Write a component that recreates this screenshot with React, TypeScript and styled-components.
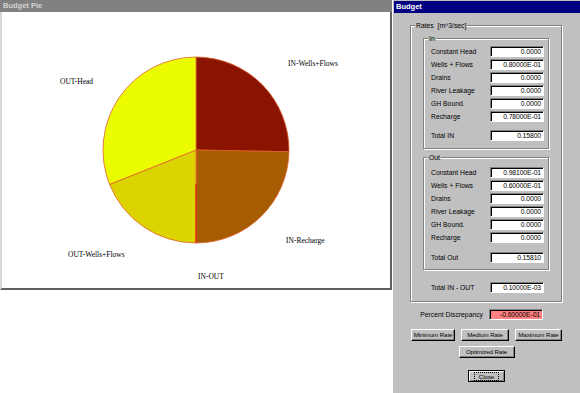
import styled, { createGlobalStyle } from 'styled-components';

const GlobalStyle = createGlobalStyle`
  html, body {
    margin: 0;
    padding: 0;
    background: #fff;
  }
  body {
    font-family: 'Liberation Sans', Arial, sans-serif;
  }
`;

const CX = 194;
const CY = 138;
const R = 93;

interface Slice {
  name: string;
  value: number;
  color: string;
}

const SLICES: Slice[] = [
  { name: 'IN-Wells+Flows', value: 0.08, color: '#8b1400' },
  { name: 'IN-Recharge', value: 0.078, color: '#a65c00' },
  { name: 'IN-OUT', value: 0.0001, color: '#e01000' },
  { name: 'OUT-Wells+Flows', value: 0.06, color: '#dcd400' },
  { name: 'OUT-Head', value: 0.0981, color: '#ecfc00' },
];

const LABELS = [
  { text: 'IN-Wells+Flows', x: 286, y: 54 },
  { text: 'OUT-Head', x: 58, y: 72 },
  { text: 'IN-Recharge', x: 284, y: 231 },
  { text: 'OUT-Wells+Flows', x: 66, y: 245 },
  { text: 'IN-OUT', x: 196, y: 267 },
];

const IN_ROWS = [
  ['Constant Head', '0.0000'],
  ['Wells + Flows', '0.80000E-01'],
  ['Drains', '0.0000'],
  ['River Leakage', '0.0000'],
  ['GH Bound.', '0.0000'],
  ['Recharge', '0.78000E-01'],
];

const OUT_ROWS = [
  ['Constant Head', '0.98100E-01'],
  ['Wells + Flows', '0.60000E-01'],
  ['Drains', '0.0000'],
  ['River Leakage', '0.0000'],
  ['GH Bound.', '0.0000'],
  ['Recharge', '0.0000'],
];

const point = (deg: number) => {
  const rad = (deg * Math.PI) / 180;
  return [CX + R * Math.sin(rad), CY - R * Math.cos(rad)];
};

const slicePath = (from: number, to: number) => {
  const [x1, y1] = point(from);
  const [x2, y2] = point(to);
  const large = to - from > 180 ? 1 : 0;
  return `M${CX},${CY} L${x1.toFixed(2)},${y1.toFixed(2)} A${R},${R} 0 ${large} 1 ${x2.toFixed(2)},${y2.toFixed(2)} Z`;
};

const PieChart = () => {
  const total = SLICES.reduce((sum, s) => sum + s.value, 0);
  let angle = 0;

  return (
    <svg width="388" height="276" viewBox="0 0 388 276">
      {SLICES.map((s) => {
        const from = angle;
        angle += (s.value / total) * 360;
        return (
          <path
            key={s.name}
            d={slicePath(from, angle)}
            fill={s.color}
            stroke="#e0602c"
            strokeWidth="0.8"
          />
        );
      })}
      <line x1={CX} y1={172} x2={CX} y2={CY + R} stroke="#d81000" strokeWidth="1" />
      {LABELS.map((l) => (
        <text
          key={l.text}
          x={l.x}
          y={l.y}
          fontFamily="'Liberation Serif', 'Times New Roman', serif"
          fontSize="7.5"
          fill="#000"
        >
          {l.text}
        </text>
      ))}
    </svg>
  );
};

const App = () => {
  return (
    <>
      <GlobalStyle />
      <Screen>
        <PieWindow>
          <PieTitle>Budget Pie</PieTitle>
          <PieCanvas>
            <PieChart />
          </PieCanvas>
        </PieWindow>

        <Dialog>
          <DialogTitle>Budget</DialogTitle>

          <RatesGroup>
            <Caption>Rates&nbsp; [m^3/sec]</Caption>

            <Group $top={6} $bottom={6}>
              <Caption>In</Caption>
              {IN_ROWS.map(([label, value]) => (
                <Row key={label}>
                  <Label>{label}</Label>
                  <Field>{value}</Field>
                </Row>
              ))}
              <Row $gap={6}>
                <Label>Total IN</Label>
                <Field>0.15800</Field>
              </Row>
            </Group>

            <Group $top={8} $bottom={5} $gap={8}>
              <Caption>Out</Caption>
              {OUT_ROWS.map(([label, value]) => (
                <Row key={label}>
                  <Label>{label}</Label>
                  <Field>{value}</Field>
                </Row>
              ))}
              <Row $gap={7}>
                <Label>Total Out</Label>
                <Field>0.15810</Field>
              </Row>
            </Group>

            <TotalRow>
              <Label>Total IN - OUT</Label>
              <Field>0.10000E-03</Field>
            </TotalRow>
          </RatesGroup>

          <DiscrepancyRow>
            <DiscrepancyLabel>Percent Discrepancy</DiscrepancyLabel>
            <Field $alert>-0.60000E-01</Field>
          </DiscrepancyRow>

          <ButtonRow $gap={8}>
            <Button $width={44}>Minimum Rate</Button>
            <Button $width={48}>Medium Rate</Button>
            <Button $width={47}>Maximum Rate</Button>
          </ButtonRow>
          <ButtonRow $gap={5}>
            <Button $width={56}>Optimized Rate</Button>
          </ButtonRow>
          <ButtonRow $gap={12}>
            <CloseButton>
              <Focus>Close</Focus>
            </CloseButton>
          </ButtonRow>
        </Dialog>
      </Screen>
    </>
  );
};

const Screen = styled.div`
  display: flex;
  align-items: flex-start;
  width: 580px;
  height: 393px;
  overflow: hidden;
  background: #fff;
`;

const PieWindow = styled.div`
  display: flex;
  flex-direction: column;
  width: 392px;
  height: 290px;
`;

const PieTitle = styled.div`
  height: 12px;
  padding-left: 3px;
  background: #808080;
  color: #d4d4d4;
  font-size: 7.5px;
  font-weight: 700;
  line-height: 12px;
`;

const PieCanvas = styled.div`
  flex: 1;
  background: #fff;
  border-left: 2px solid #d8d8d8;
  border-right: 2px solid #606060;
  border-bottom: 2px solid #606060;

  svg {
    display: block;
  }
`;

const Dialog = styled.div`
  display: flex;
  flex-direction: column;
  width: 188px;
  height: 393px;
  box-sizing: border-box;
  background: #c0c0c0;
  border-left: 1px solid #fff;
  color: #000;
  font-size: 6.8px;
`;

const DialogTitle = styled.div`
  height: 12px;
  margin: 1px 0 0 1px;
  padding-left: 2px;
  background: #000080;
  color: #fff;
  font-size: 7.5px;
  font-weight: 700;
  line-height: 12px;
`;

const Etched = styled.div`
  position: relative;
  box-sizing: border-box;
  border: 1px solid #808080;
  box-shadow: inset 1px 1px 0 #fff, 1px 1px 0 #fff;
`;

const RatesGroup = styled(Etched)`
  width: 152px;
  margin: 12px 0 0 17px;
  padding: 12px 12px 7px;
`;

const Group = styled(Etched)<{ $top: number; $bottom: number; $gap?: number }>`
  margin-top: ${(p) => p.$gap ?? 0}px;
  padding: ${(p) => p.$top}px 0 ${(p) => p.$bottom}px;
`;

const Caption = styled.span`
  position: absolute;
  top: -5px;
  left: 4px;
  padding: 0 1px;
  background: #c0c0c0;
  color: #000;
  line-height: 9px;
  white-space: nowrap;
`;

const Row = styled.div<{ $gap?: number }>`
  display: flex;
  align-items: center;
  height: 13px;
  margin-top: ${(p) => p.$gap ?? 0}px;
  padding: 0 4px 0 7px;
`;

const TotalRow = styled(Row)`
  margin-top: 11px;
  padding: 0 5px 0 8px;
`;

const Label = styled.span`
  flex: 1;
  white-space: nowrap;
  line-height: 9px;
`;

const Field = styled.div<{ $alert?: boolean }>`
  width: 54px;
  height: 11px;
  box-sizing: border-box;
  padding-right: 2px;
  border-top: 1px solid #808080;
  border-left: 1px solid #808080;
  border-bottom: 1px solid #fff;
  border-right: 1px solid #fff;
  box-shadow: inset 1px 1px 0 #000;
  background: ${(p) => (p.$alert ? '#ff8080' : '#fff')};
  text-align: right;
  font-size: 6.8px;
  line-height: 9px;
  letter-spacing: -0.1px;
  white-space: nowrap;
`;

const DiscrepancyRow = styled.div`
  display: flex;
  align-items: center;
  justify-content: flex-end;
  width: 152px;
  height: 13px;
  box-sizing: border-box;
  margin: 6px 0 0 17px;
  padding-right: 19px;
`;

const DiscrepancyLabel = styled.span`
  margin-right: 6px;
  white-space: nowrap;
  line-height: 9px;
`;

const ButtonRow = styled.div<{ $gap: number }>`
  display: flex;
  justify-content: center;
  gap: 6px;
  margin-top: ${(p) => p.$gap}px;
`;

const Button = styled.button<{ $width: number }>`
  width: ${(p) => p.$width}px;
  height: 12px;
  box-sizing: border-box;
  padding: 0;
  border: 1px solid;
  border-color: #fff #000 #000 #fff;
  box-shadow: inset -1px -1px 0 #808080;
  background: #c0c0c0;
  color: #000;
  font-family: 'Liberation Sans', Arial, sans-serif;
  font-size: 6.2px;
  letter-spacing: -0.1px;
  line-height: 10px;
  white-space: nowrap;
  overflow: hidden;
`;

const CloseButton = styled(Button).attrs({ $width: 37 })`
  border-color: #000;
  box-shadow: inset 1px 1px 0 #fff, inset -1px -1px 0 #808080;
  display: flex;
  align-items: center;
  justify-content: center;
`;

const Focus = styled.span`
  padding: 0 4px;
  outline: 1px dotted #000;
  line-height: 7px;
`;

export default App;
